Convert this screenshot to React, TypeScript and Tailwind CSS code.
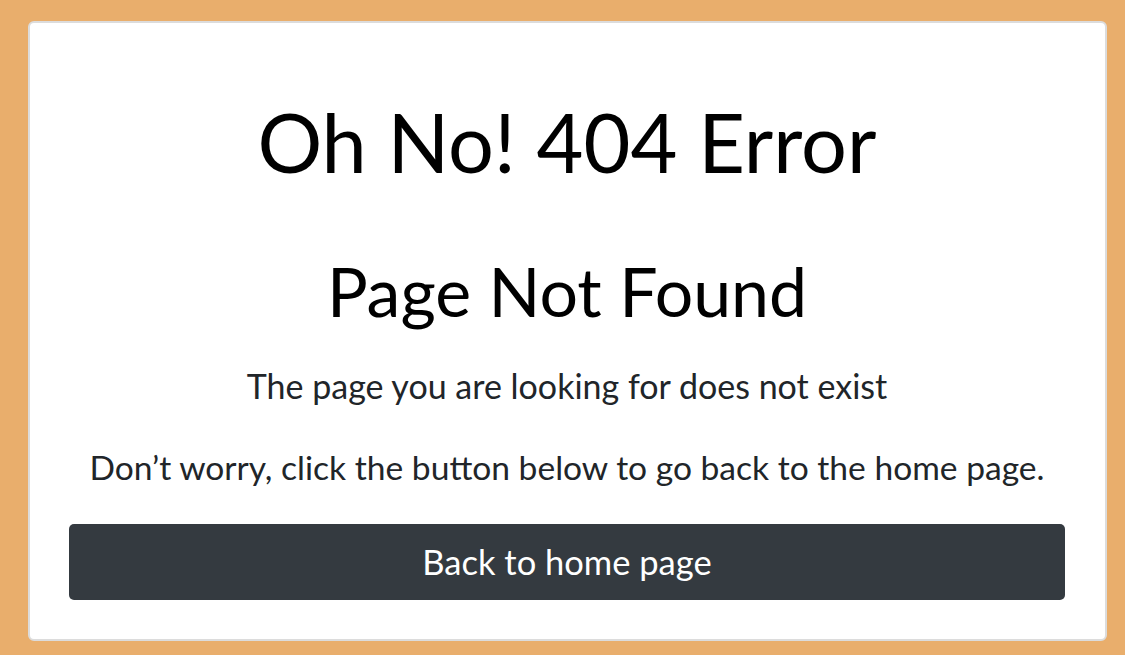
export default function App() {
  return (
    <div className="min-h-screen bg-[#e9ae6c] pl-[28px] pr-[18px] pt-[21px] pb-[14px]" style={{ fontFamily: 'Lato, "Noto Sans", sans-serif' }}>
      <div className="h-[620px] rounded-md border-2 border-[#dcdcdc] bg-white pl-[39px] pr-[40px] flex flex-col items-center text-black">
        <h1 className="mt-[78px] text-[81px] leading-[81px]">Oh No! 404 Error</h1>
        <h2 className="mt-[75px] text-[68px] leading-[68px]">Page Not Found</h2>
        <p className="mt-[44px] text-[34px] leading-[34px] text-[#212529]">The page you are looking for does not exist</p>
        <p className="mt-[47px] text-[33.6px] leading-[34px] text-[#212529]">Don’t worry, click the button below to go back to the home page.</p>
        <button className="mt-[40px] h-[76px] w-full rounded-[5px] bg-[#343a40] text-[34.5px] text-white">Back to home page</button>
      </div>
    </div>
  )
}
